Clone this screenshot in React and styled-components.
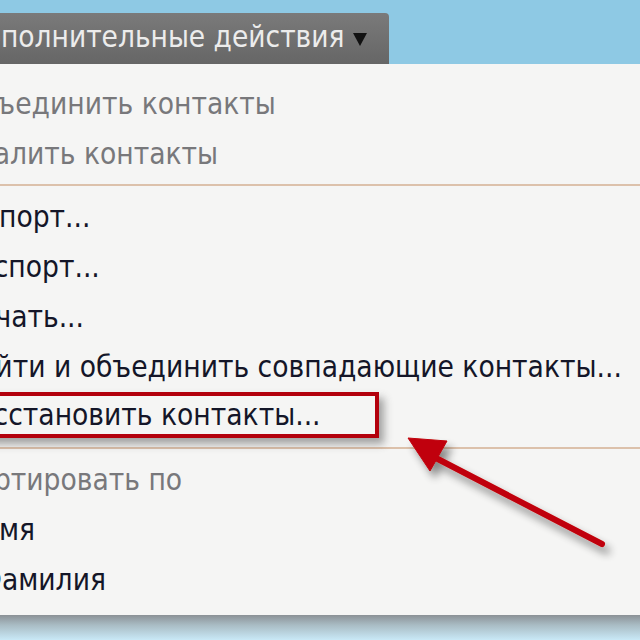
import React from 'react';
import styled, { createGlobalStyle } from 'styled-components';

const GlobalStyle = createGlobalStyle`
  html, body {
    margin: 0;
    padding: 0;
    background: #8ec8e3;
    overflow: hidden;
  }
`;

const Page = styled.div`
  position: relative;
  width: 640px;
  height: 640px;
  overflow: hidden;
  display: flex;
  flex-direction: column;
  font-family: "DejaVu Sans Condensed", "DejaVu Sans", "Liberation Sans", sans-serif;
  font-stretch: condensed;
`;

const TopBar = styled.div`
  height: 64px;
  flex: none;
  box-sizing: border-box;
  padding-top: 13px;
  background: #8ec9e4;
  display: flex;
  align-items: stretch;
`;

const Tab = styled.div`
  margin-left: -36px;
  width: 425px;
  box-sizing: border-box;
  display: flex;
  align-items: center;
  gap: 9px;
  padding-bottom: 3px;
  border-radius: 0 4px 0 0;
  background: linear-gradient(180deg, #7a7a7a 0%, #6e6e6e 60%, #666 100%);
  color: #ececec;
  font-size: 29.5px;
  white-space: nowrap;
`;

const Caret = styled.span`
  width: 0;
  height: 0;
  border-left: 7px solid transparent;
  border-right: 7px solid transparent;
  border-top: 13px solid #111;
  margin-top: 4px;
`;

const Menu = styled.div`
  flex: 1;
  margin-left: -41px;
  padding: 15px 0 10px;
  background: #f5f5f4;
  display: flex;
  flex-direction: column;
`;

const Item = styled.div`
  height: 50px;
  flex: none;
  display: flex;
  align-items: center;
  padding-left: ${p => (p.$indent ? '20px' : '0')};
  color: ${p => (p.$muted ? '#78787b' : '#141628')};
  font-size: 29.6px;
  white-space: nowrap;
`;

const Separator = styled.div`
  height: 2px;
  flex: none;
  margin: 5px 0 6px;
  background: #dcc1ab;
`;

const Highlight = styled.div`
  height: 50px;
  flex: none;
  position: relative;
  z-index: 1;
`;

const HighlightBox = styled.div`
  width: 424px;
  height: 46px;
  box-sizing: border-box;
  margin-left: -4px;
  border: 4px solid #b3000c;
  box-shadow: 5px 6px 8px rgba(60, 60, 60, 0.45);
  display: flex;
  align-items: center;
  color: #141628;
  font-size: 29.6px;
  white-space: nowrap;
`;

const Bottom = styled.div`
  height: 25px;
  flex: none;
  background: linear-gradient(180deg, #8b9196 0%, #a9bcc4 40%, #c9e9f7 100%);
`;

const ArrowLayer = styled.svg`
  position: absolute;
  left: 0;
  top: 0;
  pointer-events: none;
  z-index: 2;
`;

const Arrow = () => (
  <ArrowLayer width="640" height="640" viewBox="0 0 640 640">
    <defs>
      <filter id="sh" x="-20%" y="-20%" width="140%" height="140%">
        <feGaussianBlur in="SourceAlpha" stdDeviation="4" />
        <feOffset dx="5" dy="7" result="b" />
        <feComponentTransfer>
          <feFuncA type="linear" slope="0.45" />
        </feComponentTransfer>
        <feMerge>
          <feMergeNode />
          <feMergeNode in="SourceGraphic" />
        </feMerge>
      </filter>
    </defs>
    <g filter="url(#sh)" fill="#c00008" stroke="#c00008">
      <line x1="432" y1="456" x2="602" y2="544" strokeWidth="6" strokeLinecap="round" />
      <polygon points="408,438 447,441 430,471" strokeWidth="1" strokeLinejoin="round" />
    </g>
  </ArrowLayer>
);

export default function App() {
  return (
    <Page>
      <GlobalStyle />
      <TopBar>
        <Tab>
          <span>Дополнительные действия</span>
          <Caret />
        </Tab>
      </TopBar>
      <Menu>
        <Item $muted>Объединить контакты</Item>
        <Item $muted>Удалить контакты</Item>
        <Separator />
        <Item>Импорт...</Item>
        <Item>Экспорт...</Item>
        <Item>Печать...</Item>
        <Item>Найти и объединить совпадающие контакты...</Item>
        <Highlight>
          <HighlightBox>Восстановить контакты...</HighlightBox>
        </Highlight>
        <Separator />
        <Item $muted>Сортировать по</Item>
        <Item $indent>Имя</Item>
        <Item $indent>Фамилия</Item>
      </Menu>
      <Bottom />
      <Arrow />
    </Page>
  );
}
